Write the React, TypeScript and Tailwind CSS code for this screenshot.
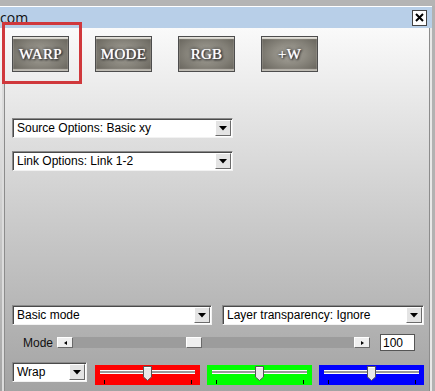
import React from 'react';

function Arrow() {
  return (
    <div className="flex h-[16px] w-[16px] shrink-0 items-center justify-center border border-t-white border-l-white border-b-[#6b6b6b] border-r-[#6b6b6b] bg-[#e4e4e4]">
      <svg width="8" height="5" viewBox="0 0 8 5">
        <path d="M0 0H8L4 4.5Z" fill="#000" />
      </svg>
    </div>
  );
}

function Combo({ label, className }: { label: string; className: string }) {
  return (
    <div
      className={`flex h-[20px] shrink-0 items-center justify-between border border-t-[#8a8a8a] border-l-[#8a8a8a] border-b-[#f2f2f2] border-r-[#f2f2f2] bg-white pr-[1px] shadow-[inset_1px_1px_0_#4a4a4a] ${className}`}
    >
      <span className="pl-[4px] text-[12px] leading-none text-black">{label}</span>
      <Arrow />
    </div>
  );
}

function SkinButton({ label }: { label: string }) {
  return (
    <div className="flex h-[36px] w-[57px] shrink-0 items-center justify-center border border-[#4d4d4d] bg-[radial-gradient(ellipse_at_50%_50%,#b3b0a7_0%,#8c8980_45%,#646159_100%)] shadow-[inset_0_2px_1px_#e2dfd8,inset_0_-2px_1px_#bdbab2]">
      <span className="font-['Liberation_Serif',serif] text-[15px] font-normal tracking-[0.3px] text-white [text-shadow:0_0_1px_#fff,0_0_3px_#1a1a1a,0_0_5px_#333,1px_1px_2px_#111]">
        {label}
      </span>
    </div>
  );
}

function ColorSlider({ bg }: { bg: string }) {
  return (
    <div className={`relative mt-[3px] h-[20px] w-[105px] shrink-0 ${bg}`}>
      <div className="absolute left-[5px] top-[5px] h-[4px] w-[95px] border-t border-b border-white bg-[#9a9a9a]" />
      <svg className="absolute left-[48px] top-[1px]" width="9" height="15" viewBox="0 0 9 15">
        <path d="M0.5 0.5H8.5V11L4.5 14.5L0.5 11Z" fill="#e8e8e8" stroke="#555" />
        <path d="M1.5 1.5H7.5" stroke="#fff" />
      </svg>
      <div className="absolute left-[9px] top-[15px] h-[4px] w-px bg-black" />
      <div className="absolute left-[96px] top-[15px] h-[4px] w-px bg-black" />
    </div>
  );
}

export default function App() {
  return (
    <div className="relative flex h-[391px] w-[435px] flex-col overflow-hidden bg-[#b2b2b2] font-['Liberation_Sans',Arial,sans-serif]">
      <div className="h-[6px] w-full bg-[#b4b4b4]" />
      <div className="flex h-[22px] w-[432px] items-center justify-between border-t border-white bg-[#b8cfe8] pr-[5px]">
        <span className="font-['Open_Sans',sans-serif] text-[14px] leading-none text-[#111]">com</span>
        <div className="flex h-[16px] w-[15px] items-center justify-center border border-[#444] bg-white">
          <svg width="9" height="9" viewBox="0 0 9 9">
            <path d="M1 1L8 8M8 1L1 8" stroke="#000" strokeWidth="2" />
          </svg>
        </div>
      </div>

      <div className="flex w-[432px] flex-1 bg-linear-to-b from-[#fafafa] to-[#a3a3a3]">
        <div className="ml-[2px] flex flex-1 flex-col border-l-2 border-r-2 border-l-[#dcdcdc] border-r-[#e8e8e8] pl-[8px] shadow-[inset_1px_0_0_#8c8c8c,inset_-1px_0_0_#8c8c8c]">
          <div className="mt-[8px] flex gap-[26px]">
            <SkinButton label="WARP" />
            <SkinButton label="MODE" />
            <SkinButton label="RGB" />
            <SkinButton label="+W" />
          </div>

          <Combo label="Source Options: Basic xy" className="mt-[46px] w-[221px]" />
          <Combo label="Link Options: Link 1-2" className="mt-[13px] w-[221px]" />

          <div className="flex-1" />

          <div className="flex gap-[10px]">
            <Combo label="Basic mode" className="w-[200px]" />
            <Combo label="Layer transparency: Ignore" className="w-[202px]" />
          </div>

          <div className="mt-[9px] flex h-[17px] items-center">
            <span className="ml-[11px] w-[34px] shrink-0 text-[12px] text-[#111]">Mode</span>
            <div className="flex h-[11px] w-[313px] shrink-0 items-center bg-[#9c9c9c]">
              <div className="flex h-[11px] w-[16px] items-center justify-center border border-t-white border-l-white border-b-[#6a6a6a] border-r-[#6a6a6a] bg-[#efefef]">
                <svg width="3" height="4" viewBox="0 0 3 4">
                  <path d="M3 0V4L0 2Z" fill="#000" />
                </svg>
              </div>
              <div className="ml-[113px] h-[11px] w-[16px] border border-t-white border-l-white border-b-[#6a6a6a] border-r-[#6a6a6a] bg-[#efefef]" />
              <div className="flex-1" />
              <div className="flex h-[11px] w-[16px] items-center justify-center border border-t-white border-l-white border-b-[#6a6a6a] border-r-[#6a6a6a] bg-[#efefef]">
                <svg width="3" height="4" viewBox="0 0 3 4">
                  <path d="M0 0V4L3 2Z" fill="#000" />
                </svg>
              </div>
            </div>
            <div className="ml-[10px] flex h-[17px] w-[35px] shrink-0 items-center border border-[#555] bg-white pl-[2px] text-[12px] leading-none text-black">
              100
            </div>
          </div>

          <div className="mb-[6px] mt-[11px] flex">
            <Combo label="Wrap" className="w-[75px]" />
            <div className="ml-[8px] flex gap-[7px]">
              <ColorSlider bg="bg-[#ff0000]" />
              <ColorSlider bg="bg-[#00ff00]" />
              <ColorSlider bg="bg-[#0000ff]" />
            </div>
          </div>
        </div>
      </div>

      <div className="absolute left-[2px] top-[22px] h-[62px] w-[80px] border-[3px] border-[#d0383c]" />
    </div>
  );
}
